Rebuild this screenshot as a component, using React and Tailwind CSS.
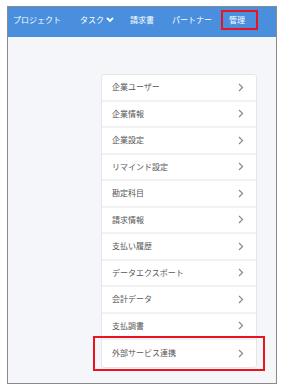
import { useState } from "react";

const menuItems = [
  "企業ユーザー",
  "企業情報",
  "企業設定",
  "リマインド設定",
  "勘定科目",
  "請求情報",
  "支払い履歴",
  "データエクスポート",
  "会計データ",
  "支払調書",
  "外部サービス連携",
];

const Chevron = ({ className }) => (
  <svg className={className} width="6" height="9" viewBox="0 0 6 9" fill="none">
    <path d="M1 1l3.5 3.5L1 8" stroke="currentColor" strokeWidth="1.2" />
  </svg>
);

const App = () => {
  const [active] = useState("外部サービス連携");

  return (
    <div
      className="w-[283px] h-[390px] bg-white pl-[7px] pt-[6px]"
      style={{ fontFamily: '"Noto Sans CJK JP", "Noto Sans", sans-serif' }}
    >
      <div className="w-[270px] h-[378px] border border-[#8a8a8a] bg-[#f5f6fa] flex flex-col">
        {/* header */}
        <div className="h-[30px] bg-[#4a8fde] flex items-center text-white text-[8px] pl-[5px] pb-[4px]">
          <span>プロジェクト</span>
          <span className="ml-[19px] flex items-center gap-[2px]">
            タスク
            <svg width="8" height="6" viewBox="0 0 8 6" fill="none">
              <path d="M1 1l3 3 3-3" stroke="white" strokeWidth="1.8" />
            </svg>
          </span>
          <span className="ml-[16px]">請求書</span>
          <span className="ml-[18px]">パートナー</span>
          <span className="ml-[9px] relative px-[8px]">
            管理
            <span className="absolute left-0 right-[-5px] top-[-4px] bottom-[-4px] border-[2px] border-[#e8141e]"></span>
          </span>
        </div>

        {/* menu */}
        <div className="pl-[93px] pt-[37px]">
          <div className="w-[156px] bg-white border border-[#e4e6ea] rounded-[3px]">
            {menuItems.map((item, i) => (
              <div
                key={item}
                className={
                  "relative h-[26.5px] flex items-center justify-between pl-[10px] pr-[12px] text-[8px] text-[#555] " +
                  (i < menuItems.length - 1 ? "border-b-[2px] border-[#f1f2f5]" : "")
                }
              >
                <span>{item}</span>
                <Chevron className="text-[#8a8a8a]" />
                {item === active && (
                  <span className="absolute left-[-9px] right-[-9px] top-[-4px] bottom-[-4px] border-[2px] border-[#e8141e]"></span>
                )}
              </div>
            ))}
          </div>
        </div>
      </div>
    </div>
  );
};

export default App;
